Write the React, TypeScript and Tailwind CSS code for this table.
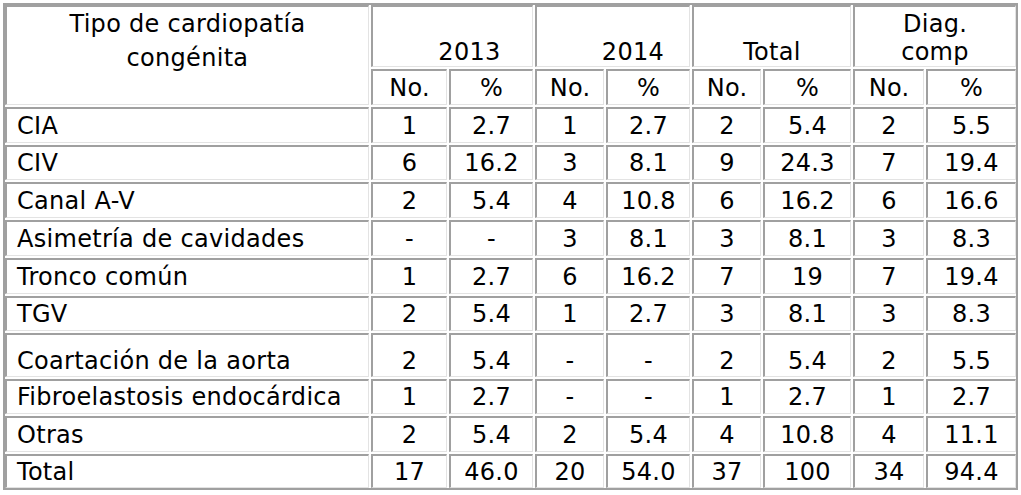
import React from 'react';

type Row = {
  label: string;
  vals: string[];
  h: string;
  extra?: string;
};

const rows: Row[] = [
  { label: 'CIA', vals: ['1', '2.7', '1', '2.7', '2', '5.4', '2', '5.5'], h: 'h-[36px]' },
  { label: 'CIV', vals: ['6', '16.2', '3', '8.1', '9', '24.3', '7', '19.4'], h: 'h-[35px]' },
  { label: 'Canal A-V', vals: ['2', '5.4', '4', '10.8', '6', '16.2', '6', '16.6'], h: 'h-[36px]' },
  { label: 'Asimetría de cavidades', vals: ['-', '-', '3', '8.1', '3', '8.1', '3', '8.3'], h: 'h-[36px]' },
  { label: 'Tronco común', vals: ['1', '2.7', '6', '16.2', '7', '19', '7', '19.4'], h: 'h-[36px]' },
  { label: 'TGV', vals: ['2', '5.4', '1', '2.7', '3', '8.1', '3', '8.3'], h: 'h-[35px]' },
  { label: 'Coartación de la aorta', vals: ['2', '5.4', '-', '-', '2', '5.4', '2', '5.5'], h: 'h-[44px]', extra: 'pt-[10px]' },
  { label: 'Fibroelastosis endocárdica', vals: ['1', '2.7', '-', '-', '1', '2.7', '1', '2.7'], h: 'h-[35px]' },
  { label: 'Otras', vals: ['2', '5.4', '2', '5.4', '4', '10.8', '4', '11.1'], h: 'h-[36px]' },
  { label: 'Total', vals: ['17', '46.0', '20', '54.0', '37', '100', '34', '94.4'], h: 'h-[34px]' },
];

// inset look: dark top/left, light bottom/right
const cell =
  'p-0 border-t-2 border-l-2 border-b border-r border-t-[#a0a0a0] border-l-[#a0a0a0] border-b-[#e3e3e3] border-r-[#e3e3e3]';

const colWidths = ['w-[76px]', 'w-[84px]', 'w-[69px]', 'w-[84px]', 'w-[69px]', 'w-[88px]', 'w-[71px]', 'w-[90px]'];

export default function App() {
  return (
    <div className="min-h-screen bg-white text-black font-['DejaVu_Sans',Verdana,sans-serif] text-[24px] leading-[28px] tracking-[0.3px]">
      <div className="inline-block m-[3px] border-2 border-[#a0a0a0]">
        <table className="-m-[2px] border-separate border-spacing-[2px]">
          <thead>
            <tr className="h-[62px]">
              <th rowSpan={2} className={`${cell} w-[364px] align-top text-center font-normal leading-[34px]`}>
                Tipo de cardiopatía
                <br />
                congénita
              </th>
              <th colSpan={2} className={`${cell} align-bottom font-normal pl-[34px]`}>
                2013
              </th>
              <th colSpan={2} className={`${cell} align-bottom font-normal pl-[40px]`}>
                2014
              </th>
              <th colSpan={2} className={`${cell} align-bottom font-normal`}>
                Total
              </th>
              <th colSpan={2} className={`${cell} align-bottom font-normal`}>
                Diag.
                <br />
                comp
              </th>
            </tr>
            <tr className="h-[36px]">
              {colWidths.map((w, i) => (
                <th key={i} className={`${cell} ${w} font-normal text-center`}>
                  {i % 2 === 0 ? 'No.' : '%'}
                </th>
              ))}
            </tr>
          </thead>
          <tbody>
            {rows.map((r) => (
              <tr key={r.label} className={r.h}>
                <td className={`${cell} text-left pl-[10px] ${r.extra ?? ''}`}>{r.label}</td>
                {r.vals.map((v, i) => (
                  <td key={i} className={`${cell} text-center ${r.extra ?? ''}`}>
                    {v}
                  </td>
                ))}
              </tr>
            ))}
          </tbody>
        </table>
      </div>
    </div>
  );
}
